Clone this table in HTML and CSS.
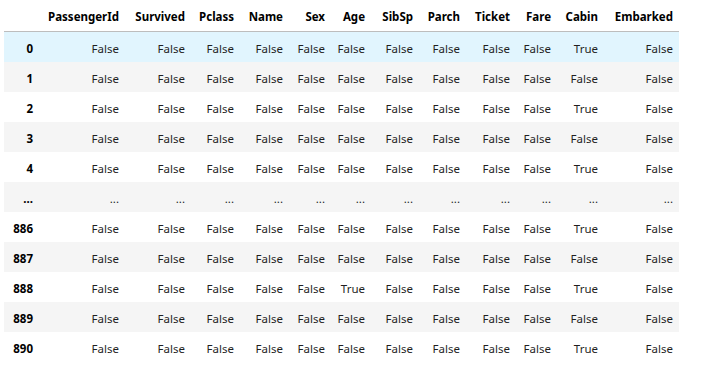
FILE: index.html
```html
<!DOCTYPE html>
<html>
<head>
<meta charset="utf-8">
<link rel="stylesheet" href="styles.css">
</head>
<body>
<table class="df">
<colgroup>
<col class="c-idx"><col class="c-pid"><col class="c-surv"><col class="c-pclass"><col class="c-name"><col class="c-sex"><col class="c-age"><col class="c-sibsp"><col class="c-parch"><col class="c-ticket"><col class="c-fare"><col class="c-cabin"><col class="c-emb">
</colgroup>
<thead>
<tr><th></th><th>PassengerId</th><th>Survived</th><th>Pclass</th><th>Name</th><th>Sex</th><th>Age</th><th>SibSp</th><th>Parch</th><th>Ticket</th><th>Fare</th><th>Cabin</th><th>Embarked</th></tr>
</thead>
<tbody>
<tr class="hover"><th>0</th><td>False</td><td>False</td><td>False</td><td>False</td><td>False</td><td>False</td><td>False</td><td>False</td><td>False</td><td>False</td><td>True</td><td>False</td></tr>
<tr><th>1</th><td>False</td><td>False</td><td>False</td><td>False</td><td>False</td><td>False</td><td>False</td><td>False</td><td>False</td><td>False</td><td>False</td><td>False</td></tr>
<tr><th>2</th><td>False</td><td>False</td><td>False</td><td>False</td><td>False</td><td>False</td><td>False</td><td>False</td><td>False</td><td>False</td><td>True</td><td>False</td></tr>
<tr><th>3</th><td>False</td><td>False</td><td>False</td><td>False</td><td>False</td><td>False</td><td>False</td><td>False</td><td>False</td><td>False</td><td>False</td><td>False</td></tr>
<tr><th>4</th><td>False</td><td>False</td><td>False</td><td>False</td><td>False</td><td>False</td><td>False</td><td>False</td><td>False</td><td>False</td><td>True</td><td>False</td></tr>
<tr><th>...</th><td>...</td><td>...</td><td>...</td><td>...</td><td>...</td><td>...</td><td>...</td><td>...</td><td>...</td><td>...</td><td>...</td><td>...</td></tr>
<tr><th>886</th><td>False</td><td>False</td><td>False</td><td>False</td><td>False</td><td>False</td><td>False</td><td>False</td><td>False</td><td>False</td><td>True</td><td>False</td></tr>
<tr><th>887</th><td>False</td><td>False</td><td>False</td><td>False</td><td>False</td><td>False</td><td>False</td><td>False</td><td>False</td><td>False</td><td>False</td><td>False</td></tr>
<tr><th>888</th><td>False</td><td>False</td><td>False</td><td>False</td><td>False</td><td>True</td><td>False</td><td>False</td><td>False</td><td>False</td><td>True</td><td>False</td></tr>
<tr><th>889</th><td>False</td><td>False</td><td>False</td><td>False</td><td>False</td><td>False</td><td>False</td><td>False</td><td>False</td><td>False</td><td>False</td><td>False</td></tr>
<tr><th>890</th><td>False</td><td>False</td><td>False</td><td>False</td><td>False</td><td>False</td><td>False</td><td>False</td><td>False</td><td>False</td><td>True</td><td>False</td></tr>
</tbody>
</table>
</body>
</html>
```
FILE: styles.css
```css
html, body {
  margin: 0;
  padding: 0;
  background: #ffffff;
}
body {
  padding: 0 0 0 4px;
  font-family: "Noto Sans", "Open Sans", sans-serif;
  font-size: 11.5px;
  color: #1f1f1f;
}
.df {
  border-collapse: collapse;
  border-spacing: 0;
  table-layout: fixed;
  width: 675px;
}
.c-idx { width: 35px; }
.c-pid { width: 86px; }
.c-surv { width: 66px; }
.c-pclass { width: 49px; }
.c-name { width: 49px; }
.c-sex { width: 42px; }
.c-age { width: 40px; }
.c-sibsp { width: 48px; }
.c-parch { width: 47px; }
.c-ticket { width: 50px; }
.c-fare { width: 41px; }
.c-cabin { width: 47px; }
.c-emb { width: 75px; }
.df th, .df td {
  text-align: right;
  padding: 8px 6px 4px;
  line-height: 18px;
  white-space: nowrap;
  overflow: visible;
}
.df thead th {
  font-weight: bold;
  color: #000;
  vertical-align: bottom;
  padding-top: 8px;
  padding-bottom: 5px;
  border-bottom: 1px solid #bdbdbd;
}
.df tbody th {
  font-weight: bold;
  color: #000;
}
.df tbody tr:nth-child(even) {
  background: #f5f5f5;
}
.df tbody tr.hover {
  background: #e1f5fe;
}
```
